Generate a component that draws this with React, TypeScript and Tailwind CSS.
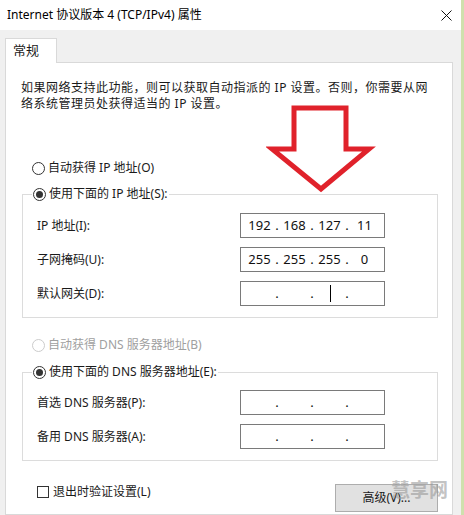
const font = { fontFamily: '"Noto Sans", "Noto Sans CJK SC", sans-serif' };

const Radio = ({ checked, disabled }: { checked?: boolean; disabled?: boolean }) => (
  <span
    className={`flex h-[13px] w-[13px] items-center justify-center rounded-full border bg-white ${
      disabled ? 'border-[#cccccc]' : 'border-[#333333]'
    }`}
  >
    {checked && <span className="h-[7px] w-[7px] rounded-full bg-[#333333]" />}
  </span>
);

const IpInput = ({ parts, caret }: { parts: string[]; caret?: boolean }) => (
  <div className="relative flex h-[25px] w-[145px] items-center border border-[#7a7a7a] bg-white pl-[3px] text-[13px] text-[#111]">
    {parts.map((p, i) => (
      <div key={i} className="flex items-center">
        <span className="w-[31px] text-center">{p}</span>
        {i < 3 && <span className="w-[4px] text-center">.</span>}
      </div>
    ))}
    {caret && <span className="absolute left-[89px] top-[3px] h-[17px] w-[1px] bg-black" />}
  </div>
);

const Row = ({ label, parts, caret }: { label: string; parts: string[]; caret?: boolean }) => (
  <div className="flex h-[25px] items-center justify-between pr-[52px]">
    <span>{label}</span>
    <IpInput parts={parts} caret={caret} />
  </div>
);

const DownArrow = () => (
  <svg width="110" height="88" viewBox="0 0 110 88" fill="none">
    <path
      d="M28 3 H80 V44 H103 L55 84 L6 44 H28 Z"
      stroke="#e0222b"
      strokeWidth="5"
      strokeLinejoin="miter"
    />
  </svg>
);

export default function App() {
  const empty = ['', '', '', ''];
  return (
    <div className="flex h-[515px] w-[464px] overflow-hidden bg-[#f0f0f0] text-[12px] text-[#1a1a1a]" style={font}>
      <div className="flex w-[461px] flex-col">
        <div className="flex h-[30px] shrink-0 items-center justify-between bg-white pl-[7px] pr-[9px]">
          <span className="text-[12px] text-black">Internet 协议版本 4 (TCP/IPv4) 属性</span>
          <svg width="11" height="11" viewBox="0 0 11 11">
            <path d="M0.5 0.5 L10.5 10.5 M10.5 0.5 L0.5 10.5" stroke="#111" strokeWidth="1" />
          </svg>
        </div>

        <div className="flex flex-1 flex-col pl-[5px] pr-[8px] pt-[8px]">
          <div className="flex">
            <div className="relative z-10 -mb-px flex h-[25px] w-[52px] items-center border border-b-0 border-[#d9d9d9] bg-white pl-[7px] text-[13px]">
              常规
            </div>
          </div>
          <div className="relative flex-1 border border-[#d9d9d9] bg-white px-[15px] pt-[17px]">
            <p className="w-[425px] leading-[16px] tracking-[0.5px]">
              如果网络支持此功能，则可以获取自动指派的 IP 设置。否则，你需要从网
              <br />
              络系统管理员处获得适当的 IP 设置。
            </p>

            <div className="absolute left-[260px] top-[42px]">
              <DownArrow />
            </div>

            <label className="ml-[11px] mt-[48px] flex h-[16px] items-center gap-[3px]">
              <Radio />
              <span>自动获得 IP 地址(O)</span>
            </label>

            <fieldset className="ml-[1px] mt-[10px] w-[416px] border border-[#dcdcdc] pb-[11px] pl-[14px] pr-0">
              <legend className="-ml-[5px] flex h-[16px] items-center gap-[3px] px-[1px]">
                <Radio checked />
                <span>使用下面的 IP 地址(S):</span>
              </legend>
              <div className="mt-[11px] flex flex-col gap-[9px]">
                <Row label="IP 地址(I):" parts={['192', '168', '127', '11']} />
                <Row label="子网掩码(U):" parts={['255', '255', '255', '0']} />
                <Row label="默认网关(D):" parts={empty} caret />
              </div>
            </fieldset>

            <label className="ml-[11px] mt-[19px] flex h-[16px] items-center gap-[3px] text-[#a0a0a0]">
              <Radio disabled />
              <span>自动获得 DNS 服务器地址(B)</span>
            </label>

            <fieldset className="ml-[1px] mt-[11px] w-[416px] border border-[#dcdcdc] pb-[11px] pl-[14px] pr-0">
              <legend className="-ml-[5px] flex h-[16px] items-center gap-[3px] px-[1px]">
                <Radio checked />
                <span>使用下面的 DNS 服务器地址(E):</span>
              </legend>
              <div className="mt-[10px] flex flex-col gap-[9px]">
                <Row label="首选 DNS 服务器(P):" parts={empty} />
                <Row label="备用 DNS 服务器(A):" parts={empty} />
              </div>
            </fieldset>

            <div className="mt-[23px] flex w-[417px] items-start justify-between">
              <label className="ml-[16px] flex h-[16px] items-center gap-[4px]">
                <span className="h-[12px] w-[12px] border border-[#333333] bg-white" />
                <span>退出时验证设置(L)</span>
              </label>
              <button className="flex h-[28px] w-[103px] items-center justify-center border border-[#adadad] bg-[#e1e1e1] text-[12px]">
                高级(V)...
              </button>
            </div>

            <span className="absolute left-[385px] top-[413px] text-[19px] font-bold text-[#9a9a9a]/60">慧享网</span>
          </div>
        </div>
      </div>
      <div className="w-[3px] bg-[#cfe0ad]" />
    </div>
  );
}
